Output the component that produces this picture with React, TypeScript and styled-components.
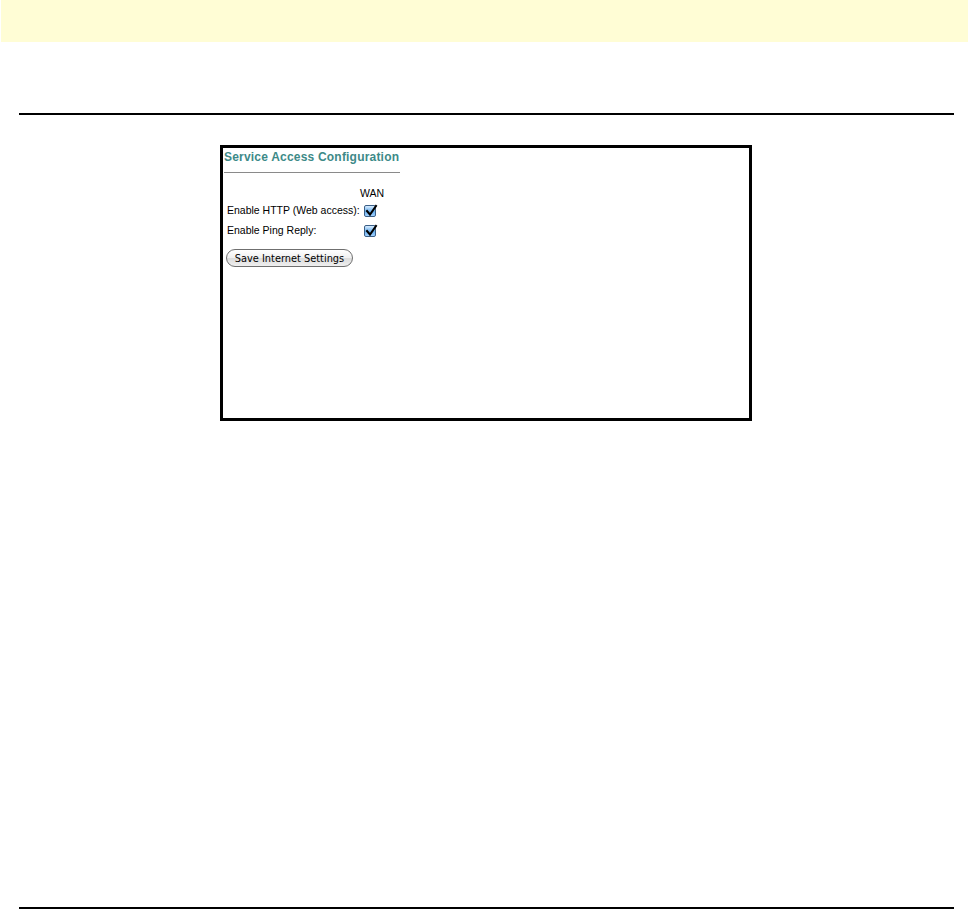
import React from "react";
import styled, { createGlobalStyle } from "styled-components";

const Global = createGlobalStyle`
  html, body { margin: 0; padding: 0; background: #fff; }
  body { font-family: "Liberation Sans", Arial, sans-serif; }
`;

const Page = styled.div`
  display: flex;
  flex-direction: column;
  width: 973px;
  height: 913px;
  overflow: hidden;
`;

const Banner = styled.div`
  margin-left: 1px;
  width: 967px;
  height: 42px;
  background: #fffdd5;
`;

const Rule = styled.div<{ $top: number }>`
  margin: ${(p) => p.$top}px 0 0 19px;
  width: 935px;
  height: 2px;
  background: #000;
`;

const BottomRule = styled(Rule)`
  margin-top: auto;
  margin-bottom: 4px;
`;

const Frame = styled.div`
  margin: 30px 0 0 220px;
  width: 526px;
  height: 270px;
  border: 3px solid #000;
  box-sizing: content-box;
`;

const Heading = styled.div`
  margin: 2px 0 0 1px;
  width: 176px;
  padding-bottom: 7px;
  border-bottom: 1px solid #8a8a8a;
  color: #3d8a88;
  font-weight: bold;
  font-size: 12px;
  letter-spacing: 0.2px;
  line-height: 15px;
  white-space: nowrap;
`;

const Table = styled.div`
  display: grid;
  grid-template-columns: 137px auto;
  margin: 14px 0 0 4px;
  font-size: 10.5px;
  line-height: 13px;
  color: #000;
  row-gap: 7px;
  align-items: center;
`;

const ColHead = styled.div`
  grid-column: 2;
  margin-left: -4px;
  margin-bottom: -3px;
`;

const Label = styled.div`
  white-space: nowrap;
`;

const CheckCell = styled.div`
  display: flex;
  align-items: center;
`;

const Box = styled.span`
  display: inline-block;
  width: 12px;
  height: 12px;
  box-sizing: border-box;
  border: 1px solid #3c5f86;
  border-radius: 2px;
  background: linear-gradient(#d8ecff, #6ab0ee 55%, #9fd0ff);
  position: relative;
`;

const Button = styled.button`
  margin: 12px 0 0 3px;
  width: 127px;
  height: 18px;
  padding: 0;
  border: 1px solid #6f6f6f;
  border-radius: 9px;
  background: linear-gradient(#ffffff, #f0f0f0 50%, #dcdcdc 51%, #efefef);
  font-family: "DejaVu Sans", "Liberation Sans", sans-serif;
  font-size: 9.8px;
  font-weight: normal;
  color: #000;
  display: block;
`;

const Check = () => (
  <Box>
    <svg
      width="13"
      height="13"
      viewBox="0 0 13 13"
      style={{ position: "absolute", left: 0, top: -2 }}
    >
      <path d="M2 7 L5 10.5 L11 2" fill="none" stroke="#000" strokeWidth="2" strokeLinecap="square" />
    </svg>
  </Box>
);

export default function App() {
  return (
    <Page>
      <Global />
      <Banner />
      <Rule $top={71} />
      <Frame>
        <Heading>Service Access Configuration</Heading>
        <Table>
          <ColHead>WAN</ColHead>
          <Label>Enable HTTP (Web access):</Label>
          <CheckCell>
            <Check />
          </CheckCell>
          <Label>Enable Ping Reply:</Label>
          <CheckCell>
            <Check />
          </CheckCell>
        </Table>
        <Button>Save Internet Settings</Button>
      </Frame>
      <BottomRule $top={0} />
    </Page>
  );
}
